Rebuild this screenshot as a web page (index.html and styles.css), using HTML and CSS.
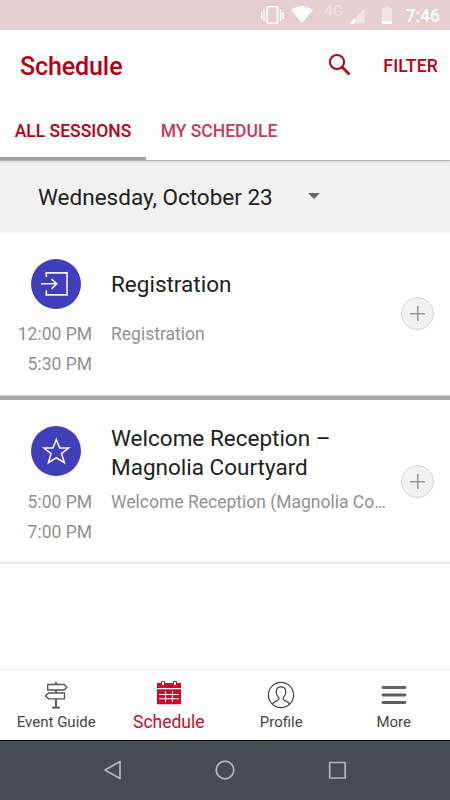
FILE: index.html
```html
<!DOCTYPE html>
<html lang="en">
<head>
<meta charset="utf-8">
<title>Schedule</title>
<link rel="stylesheet" href="styles.css">
</head>
<body>
<div class="statusbar">
  <svg class="status-icons" width="150" height="30" viewBox="0 0 150 30">
    <rect x="17.2" y="6.7" width="10.4" height="16.6" rx="1.2" fill="none" stroke="#fff" stroke-width="1.6"/>
    <path d="M14 9v12M11.700 12v7M30.800 9v12M33.100 12v7" stroke="#fff" stroke-width="1.3"/>
    <path d="M41 9.700Q52 2.500 63 9.700L52 23.300Z" fill="#fff"/>
    <path d="M114.500 8.700V23.500H99.200Z" fill="#f1e5e5"/>
    <path d="M104.500 18.400V23.500H99.200Z" fill="#fff"/>
    <path d="M131.800 8h3V6.300h4.500V8h2.700v16h-10.200Z" fill="#f1e4e4"/>
    <path d="M131.800 21h10.200v3h-10.200Z" fill="#fff"/>
  </svg>
  <span class="network">4G</span>
  <span class="clock">7:46</span>
</div>
<header class="appbar">
  <h1 class="title">Schedule</h1>
  <svg class="search" width="24" height="24" viewBox="0 0 24 24" fill="none" stroke="#b30018">
    <circle cx="9" cy="9" r="7.100" stroke-width="2"/>
    <path d="M14.300 14.300L21.500 21.500" stroke-width="2.700"/>
  </svg>
  <span class="filter">FILTER</span>
</header>
<nav class="tabs">
  <div class="tab tab-active"><span>ALL SESSIONS</span></div>
  <div class="tab"><span>MY SCHEDULE</span></div>
</nav>
<div class="datebar"><span class="date">Wednesday, October 23</span><i class="caret"></i></div>
<main class="sessions">
  <article class="session">
    <div class="badge">
      <svg width="50" height="50" viewBox="0 0 50 50" fill="none" stroke="#f4f2ff" stroke-width="1.600">
        <path d="M15.300 18V13.900H36V35.900H15.300V31.300M10 24.800H25.500M20.500 20L25.800 24.800L20.500 29.800"/>
      </svg>
    </div>
    <h2 class="name">Registration</h2>
    <div class="times"><span>12:00 PM</span><span>5:30 PM</span></div>
    <p class="place">Registration</p>
    <div class="add"></div>
  </article>
  <article class="session">
    <div class="badge">
      <svg width="50" height="50" viewBox="0 0 50 50" fill="none" stroke="#f4f2ff" stroke-width="1.600">
        <path d="M25.300 13.500L28.700 22H37.500L30.500 27.600L33.300 36.600L25.300 31.700L17.400 36.600L20 27.600L13 22H22Z"/>
      </svg>
    </div>
    <h2 class="name">Welcome Reception –<br>Magnolia Courtyard</h2>
    <div class="times"><span>5:00 PM</span><span>7:00 PM</span></div>
    <p class="place">Welcome Reception (Magnolia Co…</p>
    <div class="add"></div>
  </article>
</main>
<footer class="bottomnav">
  <div class="item">
    <svg width="28" height="30" viewBox="0 0 28 30" fill="none" stroke="#555" stroke-width="1.300">
      <path d="M5.700 4.500H22L25 7.300L22 10H5.700ZM22.500 13H6.500L3.500 16L6.500 18.800H22.500Z"/>
      <path d="M14 2v2M14 10v3M14 19v9M10 27.600H18" stroke-width="1.900"/>
    </svg>
    <span>Event Guide</span>
  </div>
  <div class="item item-active">
    <svg width="28" height="30" viewBox="0 0 28 30">
      <path d="M2 3H26V8H2ZM2 9.300H26V24.200H2Z" fill="#c90b2c"/>
      <path d="M6.500 1.500h3v4h-3ZM18.500 1.500h3v4h-3Z" fill="#fff" stroke="#c90b2c"/>
      <path d="M4 14.500H24M4 18.800H24M10.500 11V22M17.500 11V22" stroke="#fff" stroke-width="1.100"/>
    </svg>
    <span>Schedule</span>
  </div>
  <div class="item">
    <svg width="28" height="30" viewBox="0 0 28 30" fill="none" stroke="#454545" stroke-width="1.200">
      <circle cx="14" cy="15" r="12.600"/>
      <path d="M5.500 24C6.500 21.500 11 21 11.800 19.200V17.500C9.500 15.200 9 12 9.500 10C10.300 5.800 17.700 5.800 18.500 10C19 12 18.500 15.200 16.200 17.500V19.200C17 21 21.500 21.500 22.500 24"/>
    </svg>
    <span>Profile</span>
  </div>
  <div class="item">
    <svg width="28" height="30" viewBox="0 0 28 30" stroke="#606060" stroke-width="2.800" stroke-linecap="round">
      <path d="M3 7.500H25M3 15H25M3 22.500H25"/>
    </svg>
    <span>More</span>
  </div>
</footer>
<div class="systembar">
  <svg width="450" height="59" viewBox="0 0 450 59" fill="none" stroke="#b4b8ba" stroke-width="1.700" stroke-linejoin="round">
    <path d="M105 29L120 20.500V37.500Z"/>
    <circle cx="225" cy="29" r="8.800"/>
    <rect x="329.700" y="21.500" width="15.500" height="15.500"/>
  </svg>
</div>
</body>
</html>
```
FILE: styles.css
```css
* { box-sizing: border-box; }
body {
  margin: 0;
  width: 450px;
  height: 800px;
  display: flex;
  flex-direction: column;
  overflow: hidden;
  background: #fff;
  font-family: Roboto, sans-serif;
  color: #212121;
}
h1, h2, p { margin: 0; font-weight: 400; }
svg { display: block; flex: none; }
.statusbar {
  position: relative;
  height: 30px;
  flex: none;
  display: flex;
  justify-content: flex-end;
  align-items: center;
  padding-right: 10px;
  background: #e5cfcf;
  color: #fff;
}
.status-icons { position: absolute; left: 250px; top: 0; }
.network { position: absolute; left: 324px; top: 2px; font-size: 15.5px; font-weight: 500; line-height: 19px; color: #f0dfdf; }
.clock { font-size: 17.5px; font-weight: 500; line-height: 30px; padding-top: 1px; }
.appbar {
  height: 70px;
  flex: none;
  display: flex;
  align-items: center;
  padding: 0 12px 0 20px;
  color: #b30018;
}
.title { flex: 1; font-size: 25px; font-weight: 500; letter-spacing: -.1px; padding-top: 2px; }
.search { margin-right: 31px; }
.filter { font-size: 17.5px; font-weight: 500; letter-spacing: .2px; padding-top: 1px; }
.tabs {
  height: 60px;
  flex: none;
  display: flex;
  background: #fff;
}
.tab { width: 146px; height: 60px; text-align: center; font-size: 17.5px; font-weight: 500; line-height: 63px; color: #c43b62; white-space: nowrap; }
.tab-active { color: #b30018; border-bottom: 3px solid #a1a1a1; }
.datebar {
  height: 73px;
  flex: none;
  display: flex;
  align-items: center;
  padding-left: 38px;
  background: #f1f1f1;
  border-bottom: 1px solid #f8f8f8;
  box-shadow: inset 0 1px #b4b4b4, inset 0 3px 2px -1px #dedede;
}
.date { width: 270px; font-size: 22.5px; padding-top: 2px; }
.caret { border: 6px solid transparent; border-top-color: #686868; border-bottom: 0; }
.sessions { height: 436px; flex: none; }
.session {
  display: grid;
  grid-template: 91px 71px / 92px 280px 1fr;
  column-gap: 19px;
  height: 167px;
  border-bottom: 4px solid #a6a6a6;
  box-shadow: inset 0 -1px #d0d0d0;
}
.session + .session { height: 164px; border-bottom: 2px solid #e8e8e8; box-shadow: none; }
.badge { width: 50px; height: 50px; margin: 26px 0 0 31px; border-radius: 50%; background: #3f3fba; }
.session + .session .badge { margin-top: 26.4px; }
.name { align-self: start; margin-top: 37px; font-size: 22.5px; line-height: 29px; }
.session + .session .name { margin-top: 24px; }
.times { grid-column: 1; grid-row: 2; display: flex; flex-direction: column; align-items: flex-end; font-size: 17.5px; line-height: 30px; margin-top: -5px; color: #919191; }
.place { grid-column: 2; grid-row: 2; font-size: 17.5px; line-height: 30px; margin-top: -5px; color: #919191; white-space: nowrap; }
.session + .session .times, .session + .session .place { margin-top: -4px; }
.add {
  grid-column: 3;
  grid-row: 1 / 3;
  width: 33px;
  height: 33px;
  margin: 64px 0 0 -9px;
  border: 1.5px solid #d5d5d5;
  border-radius: 50%;
  background: linear-gradient(#949494, #949494) center / 15px 1.5px no-repeat, linear-gradient(#949494, #949494) center / 1.5px 15px no-repeat, #f2f2f2;
}
.session + .session .add { margin-top: 65px; }
.bottomnav {
  height: 71px;
  flex: none;
  display: grid;
  grid-template-columns: repeat(4, 1fr);
  border-top: 1px solid #ededed;
}
.item { display: flex; flex-direction: column; align-items: center; padding-top: 10px; font-size: 15px; line-height: 25px; color: #454545; }
.item-active { font-size: 17.5px; color: #c90b2c; }
.systembar { height: 60px; flex: none; background: #444d52; border-top: 1px solid #000; }
```
